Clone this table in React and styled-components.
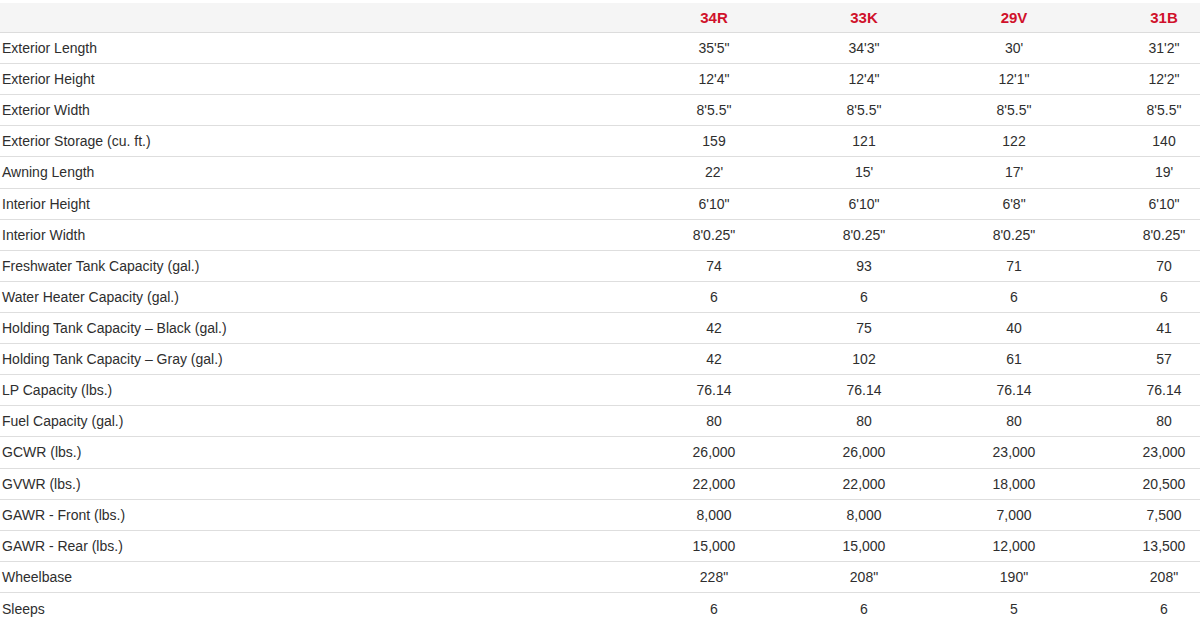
import React from 'react'
import styled, { createGlobalStyle } from 'styled-components'

const GlobalStyle = createGlobalStyle`
  html, body {
    margin: 0;
    padding: 0;
    background: #fff;
    overflow: hidden;
  }
  body {
    font-family: "Liberation Sans", Arial, sans-serif;
    color: #333;
  }
`;

const Wrapper = styled.div`
  width: 1200px;
  height: 624px;
  overflow: hidden;
  padding-top: 3px;
  box-sizing: border-box;
`;

const Table = styled.div`
  width: 1239px;
  display: grid;
  grid-template-columns: 639px repeat(4, 150px);
`;

const Row = styled.div`
  display: contents;
`;

const HeadCell = styled.div`
  height: 29px;
  background: #f5f5f5;
  border-bottom: 1px solid #dcdcdc;
  display: flex;
  align-items: center;
  justify-content: center;
  color: #d0112b;
  font-weight: bold;
  font-size: 15px;
`;

const Cell = styled.div`
  height: 31.11px;
  box-sizing: border-box;
  border-bottom: ${p => (p.$last ? 'none' : '1px solid #dedede')};
  display: flex;
  align-items: center;
  justify-content: ${p => (p.$label ? 'flex-start' : 'center')};
  padding-left: ${p => (p.$label ? '2px' : '0')};
  font-size: 14px;
  color: #2e2e2e;
  white-space: nowrap;
`;

const models = ['34R', '33K', '29V', '31B'];

const specs = [
  ['Exterior Length', `35'5"`, `34'3"`, `30'`, `31'2"`],
  ['Exterior Height', `12'4"`, `12'4"`, `12'1"`, `12'2"`],
  ['Exterior Width', `8'5.5"`, `8'5.5"`, `8'5.5"`, `8'5.5"`],
  ['Exterior Storage (cu. ft.)', '159', '121', '122', '140'],
  ['Awning Length', `22'`, `15'`, `17'`, `19'`],
  ['Interior Height', `6'10"`, `6'10"`, `6'8"`, `6'10"`],
  ['Interior Width', `8'0.25"`, `8'0.25"`, `8'0.25"`, `8'0.25"`],
  ['Freshwater Tank Capacity (gal.)', '74', '93', '71', '70'],
  ['Water Heater Capacity (gal.)', '6', '6', '6', '6'],
  ['Holding Tank Capacity \u2013 Black (gal.)', '42', '75', '40', '41'],
  ['Holding Tank Capacity \u2013 Gray (gal.)', '42', '102', '61', '57'],
  ['LP Capacity (lbs.)', '76.14', '76.14', '76.14', '76.14'],
  ['Fuel Capacity (gal.)', '80', '80', '80', '80'],
  ['GCWR (lbs.)', '26,000', '26,000', '23,000', '23,000'],
  ['GVWR (lbs.)', '22,000', '22,000', '18,000', '20,500'],
  ['GAWR - Front (lbs.)', '8,000', '8,000', '7,000', '7,500'],
  ['GAWR - Rear (lbs.)', '15,000', '15,000', '12,000', '13,500'],
  ['Wheelbase', `228"`, `208"`, `190"`, `208"`],
  ['Sleeps', '6', '6', '5', '6'],
];

const App = () => {
  return (
    <Wrapper>
      <GlobalStyle />
      <Table>
        <Row>
          <HeadCell />
          {models.map(m => (
            <HeadCell key={m}>{m}</HeadCell>
          ))}
        </Row>
        {specs.map((row, i) => {
          const last = i === specs.length - 1
          return (
            <Row key={row[0]}>
              {row.map((v, j) => (
                <Cell key={j} $label={j === 0} $last={last}>{v}</Cell>
              ))}
            </Row>
          )
        })}
      </Table>
    </Wrapper>
  )
}

export default App
